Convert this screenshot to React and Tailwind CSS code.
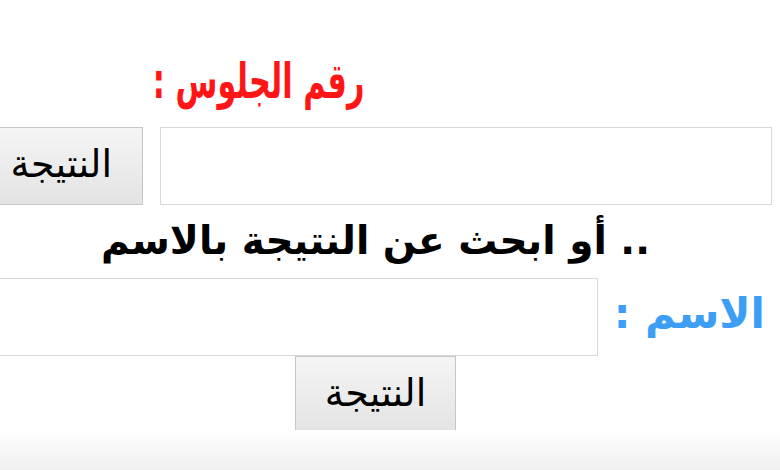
export default function App() {
  return (
    <div dir="rtl" className="relative w-[780px] h-[470px] overflow-hidden bg-white font-['DejaVu_Sans',sans-serif]">
      {/* Seat number title */}
      <div className="h-[127px] pt-[50px] mr-[262px] text-center">
        <span className="inline-block scale-x-[0.62] text-[49px] leading-[64px] font-bold text-[#ff1515]">رقم الجلوس :</span>
      </div>

      {/* Seat number row */}
      <div className="flex h-[78px] mr-[8px] gap-[17px]">
        <div className="w-[612px] shrink-0 border border-[#d9d9d9] bg-white"></div>
        <button className="w-[165px] shrink-0 border border-[#c6c6c6] bg-gradient-to-b from-[#f5f5f5] to-[#e3e3e3] text-[38px] leading-none text-black text-right pr-[30px] pb-[4px]">
          النتيجة
        </button>
      </div>

      {/* Or search by name */}
      <div className="h-[73px] pt-[8px] mr-[130px] text-right">
        <span className="text-[39px] leading-[56px] font-bold text-black">.. أو ابحث عن النتيجة بالاسم</span>
      </div>

      {/* Name row */}
      <div className="flex h-[78px] mr-[15px]">
        <div className="w-[167px] shrink-0 pt-[6px]">
          <span className="text-[42px] leading-[60px] font-bold text-[#3d9ef5]">الاسم :</span>
        </div>
        <div className="w-[620px] shrink-0 border border-[#d9d9d9] bg-white"></div>
      </div>

      {/* Result button */}
      <div className="mr-[324px]">
        <button className="w-[161px] h-[78px] border border-[#c6c6c6] bg-gradient-to-b from-[#f5f5f5] to-[#e3e3e3] text-[38px] leading-none text-black pb-[4px]">
          النتيجة
        </button>
      </div>

      {/* Bottom fade */}
      <div className="absolute left-0 right-0 bottom-0 h-[40px] bg-gradient-to-b from-white to-[#efefef]"></div>
    </div>
  );
}
